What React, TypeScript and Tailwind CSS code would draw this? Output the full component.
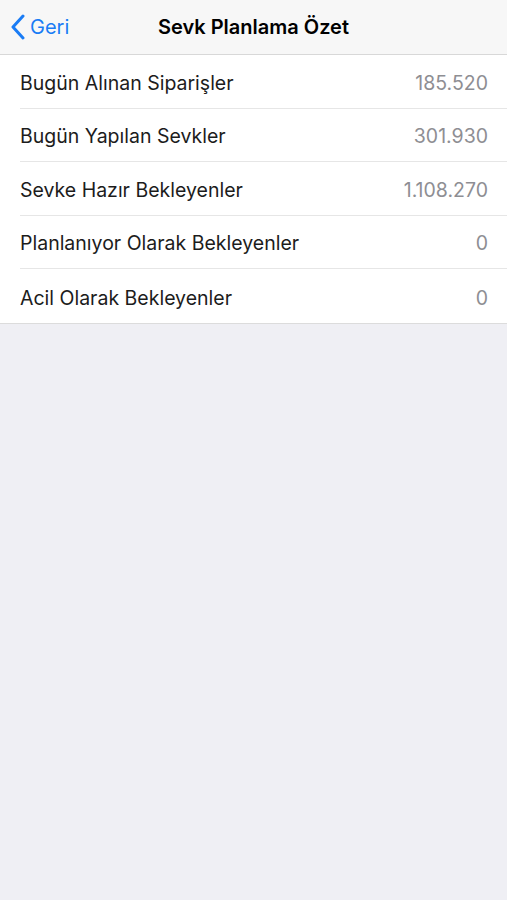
const ROWS = [
  { label: "Bugün Alınan Siparişler", value: "185.520" },
  { label: "Bugün Yapılan Sevkler", value: "301.930" },
  { label: "Sevke Hazır Bekleyenler", value: "1.108.270" },
  { label: "Planlanıyor Olarak Bekleyenler", value: "0" },
  { label: "Acil Olarak Bekleyenler", value: "0" },
];

export default function App() {
  return (
    <div
      className="min-h-[900px] w-[507px] bg-[#efeff4]"
      style={{ fontFamily: "Inter, 'Liberation Sans', sans-serif" }}
    >
      <div className="relative flex h-[55px] items-center justify-center border-b border-[#d8d8d8] bg-[#f7f7f7]">
        <div className="absolute left-[10px] top-0 flex h-full items-center text-[#1a7cf5]">
          <svg width="16" height="26" viewBox="0 0 16 26" fill="none">
            <path d="M13 2 L3 13 L13 24" stroke="currentColor" strokeWidth="3" strokeLinecap="round" strokeLinejoin="round" />
          </svg>
          <span className="ml-[4px] text-[20px]">Geri</span>
        </div>
        <span className="text-[20px] font-semibold text-black">Sevk Planlama Özet</span>
      </div>

      <div className="border-b border-[#dcdcdc] bg-white">
        {ROWS.map((row, i) => (
          <div key={row.label} className="pl-[20px]">
            <div
              className={`flex h-[53.6px] items-center justify-between pr-[19px] pt-[4px] ${
                i < ROWS.length - 1 ? "border-b border-[#e6e6e6]" : ""
              }`}
            >
              <span className="text-[19.5px] text-[#1c1c1c]">{row.label}</span>
              <span className="text-[19.5px] text-[#8e8e93]">{row.value}</span>
            </div>
          </div>
        ))}
      </div>
    </div>
  );
}
